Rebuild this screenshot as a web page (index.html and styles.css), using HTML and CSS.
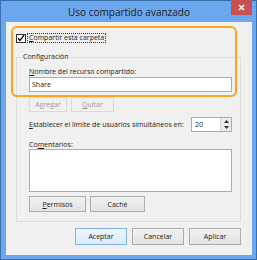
FILE: index.html
```html
<!DOCTYPE html>
<html>
<head>
<meta charset="utf-8">
<link rel="stylesheet" href="styles.css">
</head>
<body>
<div class="window">
  <div class="titlebar">
    <span class="title">Uso compartido avanzado</span>
    <div class="close"><svg width="7" height="7" viewBox="0 0 7 7"><path d="M1 1L6 6M6 1L1 6" stroke="#fff" stroke-width="1.4"/></svg></div>
  </div>
  <div class="content">
    <div class="share-row">
      <span class="cb"><svg width="8" height="8" viewBox="0 0 8 8"><path d="M1 4.2L3 6.4L7 1.2" fill="none" stroke="#000" stroke-width="1.3"/></svg></span>
      <span class="focus"><u>C</u>ompartir esta carpeta</span>
    </div>
    <fieldset class="group">
      <legend>Configuración</legend>
      <div class="group-body">
        <div class="label l-name"><u>N</u>ombre del recurso compartido:</div>
        <div class="input">Share</div>
        <div class="btn-row r-add">
          <div class="btn disabled w-add">A<u>g</u>regar</div>
          <div class="btn disabled w-quit"><u>Q</u>uitar</div>
        </div>
        <div class="limit-row">
          <span><u>E</u>stablecer el límite de usuarios simultáneos en:</span>
          <div class="spin">
            <span class="spin-val">20</span>
            <div class="spin-arrows">
              <div class="arr"><svg width="5" height="3" viewBox="0 0 5 3"><path d="M0 3L2.5 0L5 3Z" fill="#333"/></svg></div>
              <div class="arr"><svg width="5" height="3" viewBox="0 0 5 3"><path d="M0 0L2.5 3L5 0Z" fill="#333"/></svg></div>
            </div>
          </div>
        </div>
        <div class="label l-com">Co<u>m</u>entarios:</div>
        <div class="textarea"></div>
        <div class="btn-row r-perm">
          <div class="btn w-perm"><u>P</u>ermisos</div>
          <div class="btn w-cache">Caché</div>
        </div>
      </div>
    </fieldset>
    <div class="footer">
      <div class="btn fbtn default">Aceptar</div>
      <div class="btn fbtn">Cancelar</div>
      <div class="btn fbtn">Aplicar</div>
    </div>
    <div class="highlight"></div>
  </div>
</div>
</body>
</html>
```

FILE: styles.css
```css
* { box-sizing: border-box; margin: 0; padding: 0; }
html, body { margin: 0; width: 257px; height: 260px; overflow: hidden; }
body {
  font-family: "Open Sans", "Noto Sans", sans-serif;
  font-size: 7px;
  color: #1a1a1a;
}
u { text-decoration: underline; text-underline-offset: 1px; }

.window {
  width: 257px;
  height: 260px;
  border: 1px solid #3a6ea8;
  background: #6ba7ee;
  display: flex;
  flex-direction: column;
  padding: 0 4px 4px 5px;
}
.titlebar {
  height: 21px;
  flex: none;
  position: relative;
  display: flex;
  align-items: center;
  justify-content: center;
}
.title {
  font-size: 10px;
  color: #1c1c1c;
  padding-top: 1px;
}
.close {
  position: absolute;
  right: 0;
  top: -1px;
  width: 21px;
  height: 15px;
  background: #c75050;
  display: flex;
  align-items: center;
  justify-content: center;
}
.close svg { display: block; }

.content {
  flex: 1;
  background: #f0f0f0;
  position: relative;
  padding: 11px 11px 0 10px;
  display: flex;
  flex-direction: column;
}

.share-row {
  height: 10px;
  display: flex;
  align-items: center;
  gap: 1px;
}
.cb {
  width: 10px;
  height: 9px;
  border: 1px solid #333;
  background: #fff;
  display: flex;
  align-items: center;
  justify-content: center;
}
.cb svg { display: block; }
.focus {
  border: 1px dotted #333;
  line-height: 8px;
  padding: 0 1px;
}

.group {
  border: 1px solid #dcdcdc;
  margin-top: 9px;
  min-width: 0;
  padding: 0;
}
.group legend {
  margin-left: 5px;
  padding: 0 1px;
  line-height: 10px;
}
.group-body {
  display: flex;
  flex-direction: column;
  padding: 0 8px 9px 12px;
}
.label { line-height: 11px; }
.l-name { margin-top: 4px; }
.input {
  margin-top: 0;
  height: 15px;
  border: 1px solid #abadb3;
  background: #fff;
  line-height: 13px;
  padding-left: 2px;
}
.btn-row { display: flex; gap: 4px; }
.r-add { margin-top: 5px; }
.r-perm { margin-top: 4px; }
.btn {
  height: 15px;
  border: 1px solid #acacac;
  background: linear-gradient(#f2f2f2, #e3e3e3);
  display: flex;
  align-items: center;
  justify-content: center;
}
.btn.disabled {
  border-color: #d9d9d9;
  background: #f0f0f0;
  color: #9b9b9b;
}
.w-add { width: 38px; }
.w-quit { width: 43px; }
.w-perm { width: 57px; height: 16px; }
.w-cache { width: 55px; height: 16px; }

.limit-row {
  margin-top: 5px;
  height: 15px;
  display: flex;
  align-items: center;
  justify-content: space-between;
}
.spin {
  width: 41px;
  height: 15px;
  border: 1px solid #abadb3;
  background: #fff;
  display: flex;
}
.spin-val { flex: 1; padding-left: 3px; line-height: 13px; }
.spin-arrows {
  width: 11px;
  display: flex;
  flex-direction: column;
  background: #ececec;
  border-left: 1px solid #d6d6d6;
}
.arr { flex: 1; display: flex; align-items: center; justify-content: center; }
.arr svg { display: block; }

.l-com { margin-top: 8px; line-height: 9px; }
.textarea {
  height: 43px;
  border: 1px solid #abadb3;
  background: #fff;
}

.footer {
  margin-top: 6px;
  display: flex;
  justify-content: flex-end;
  gap: 5px;
}
.fbtn { width: 52px; height: 17px; }
.fbtn.default { border-color: #7eb4ea; background: linear-gradient(#ecf4fc, #dcecfc); }

.highlight {
  position: absolute;
  left: 5px;
  top: 4px;
  width: 226px;
  height: 71px;
  border: 2px solid #ffa51a;
  border-radius: 6px;
  pointer-events: none;
}
```
